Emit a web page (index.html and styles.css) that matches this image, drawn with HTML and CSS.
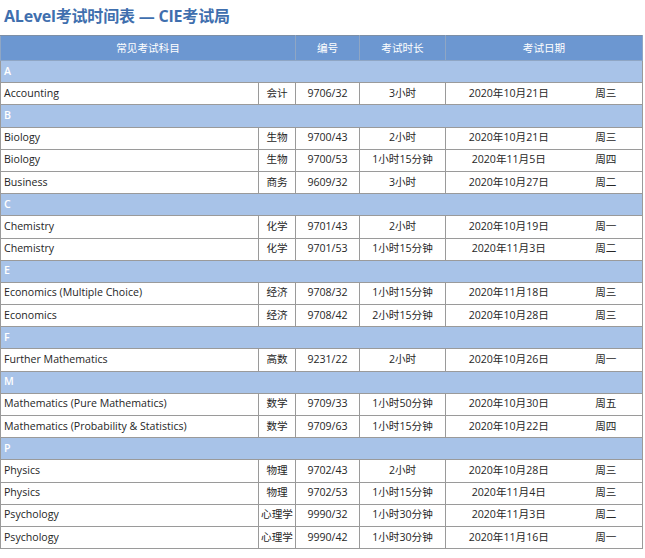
FILE: index.html
```html
<!DOCTYPE html>
<html lang="zh">
<head>
<meta charset="utf-8">
<title>ALevel考试时间表</title>
<link rel="stylesheet" href="styles.css">
</head>
<body>
<h1 class="title">ALevel考试时间表 — CIE考试局</h1>
<table class="sched">
<colgroup>
<col class="c-subj"><col class="c-cn"><col class="c-code"><col class="c-dur"><col class="c-date"><col class="c-wd">
</colgroup>
<thead>
<tr><th colspan="2">常见考试科目</th><th>编号</th><th>考试时长</th><th colspan="2">考试日期</th></tr>
</thead>
<tbody>
<tr class="grp"><td colspan="6">A</td></tr>
<tr><td class="s">Accounting</td><td>会计</td><td>9706/32</td><td>3小时</td><td class="d">2020年10月21日</td><td class="w">周三</td></tr>
<tr class="grp"><td colspan="6">B</td></tr>
<tr><td class="s">Biology</td><td>生物</td><td>9700/43</td><td>2小时</td><td class="d">2020年10月21日</td><td class="w">周三</td></tr>
<tr><td class="s">Biology</td><td>生物</td><td>9700/53</td><td>1小时15分钟</td><td class="d">2020年11月5日</td><td class="w">周四</td></tr>
<tr><td class="s">Business</td><td>商务</td><td>9609/32</td><td>3小时</td><td class="d">2020年10月27日</td><td class="w">周二</td></tr>
<tr class="grp"><td colspan="6">C</td></tr>
<tr><td class="s">Chemistry</td><td>化学</td><td>9701/43</td><td>2小时</td><td class="d">2020年10月19日</td><td class="w">周一</td></tr>
<tr><td class="s">Chemistry</td><td>化学</td><td>9701/53</td><td>1小时15分钟</td><td class="d">2020年11月3日</td><td class="w">周二</td></tr>
<tr class="grp"><td colspan="6">E</td></tr>
<tr><td class="s">Economics (Multiple Choice)</td><td>经济</td><td>9708/32</td><td>1小时15分钟</td><td class="d">2020年11月18日</td><td class="w">周三</td></tr>
<tr><td class="s">Economics</td><td>经济</td><td>9708/42</td><td>2小时15分钟</td><td class="d">2020年10月28日</td><td class="w">周三</td></tr>
<tr class="grp"><td colspan="6">F</td></tr>
<tr><td class="s">Further Mathematics</td><td>高数</td><td>9231/22</td><td>2小时</td><td class="d">2020年10月26日</td><td class="w">周一</td></tr>
<tr class="grp"><td colspan="6">M</td></tr>
<tr><td class="s">Mathematics (Pure Mathematics)</td><td>数学</td><td>9709/33</td><td>1小时50分钟</td><td class="d">2020年10月30日</td><td class="w">周五</td></tr>
<tr><td class="s">Mathematics (Probability &amp; Statistics)</td><td>数学</td><td>9709/63</td><td>1小时15分钟</td><td class="d">2020年10月22日</td><td class="w">周四</td></tr>
<tr class="grp"><td colspan="6">P</td></tr>
<tr><td class="s">Physics</td><td>物理</td><td>9702/43</td><td>2小时</td><td class="d">2020年10月28日</td><td class="w">周三</td></tr>
<tr><td class="s">Physics</td><td>物理</td><td>9702/53</td><td>1小时15分钟</td><td class="d">2020年11月4日</td><td class="w">周三</td></tr>
<tr><td class="s">Psychology</td><td>心理学</td><td>9990/32</td><td>1小时30分钟</td><td class="d">2020年11月3日</td><td class="w">周二</td></tr>
<tr><td class="s">Psychology</td><td>心理学</td><td>9990/42</td><td>1小时30分钟</td><td class="d">2020年11月16日</td><td class="w">周一</td></tr>
</tbody>
</table>
</body>
</html>
```

FILE: styles.css
```css
html, body {
  margin: 0;
  padding: 0;
  background: #ffffff;
}
body {
  font-family: "Open Sans", "Noto Sans CJK SC", sans-serif;
  color: #262626;
}
.title {
  margin: 0;
  padding: 5px 0 0 4px;
  height: 29px;
  box-sizing: border-box;
  font-size: 16px;
  line-height: 22px;
  font-weight: 700;
  color: #3f6fae;
  letter-spacing: -0.2px;
}
.sched {
  border-collapse: collapse;
  table-layout: fixed;
  width: 642px;
  margin: 6px 0 0 0;
  font-size: 10.6px;
}
.c-subj { width: 258px; }
.c-cn { width: 37px; }
.c-code { width: 64px; }
.c-dur { width: 86px; }
.c-date { width: 126px; }
.c-wd { width: 71px; }
.sched th {
  background: #6c97d1;
  color: #ffffff;
  font-weight: 400;
  height: 22px;
  padding: 0 0 2px 0;
  border: 1px solid #8fa6c4;
  border-top-color: #7d8fa6;
  text-align: center;
}
.sched td {
  height: 19.2px;
  padding: 0 0 2px 0;
  border: 1px solid #9a9a9a;
  text-align: center;
  white-space: nowrap;
  line-height: 14px;
}
.sched td.s {
  text-align: left;
  padding-left: 3px;
}
.sched td.d { border-right: none; }
.sched td.w { border-left: none; padding-right: 2px; }
.sched tr.grp td {
  background: #a8c3e8;
  color: #ffffff;
  text-align: left;
  padding-left: 3px;
  font-weight: 600;
  border-left-color: #9a9a9a;
  border-right-color: #9a9a9a;
}
```
